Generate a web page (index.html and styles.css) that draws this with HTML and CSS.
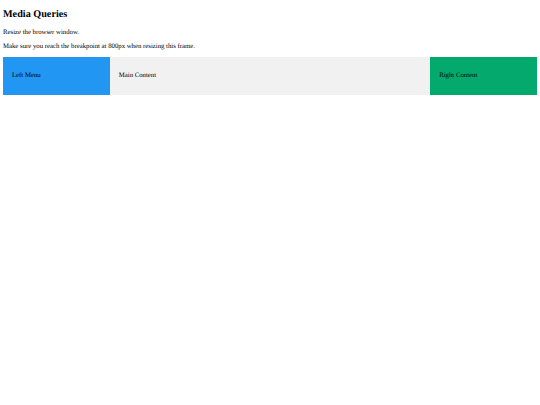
FILE: index.html
```html
<!DOCTYPE html>
<html>
<head>
<meta charset="utf-8">
<link rel="stylesheet" href="styles.css">
</head>
<body>
<h2 class="title">Media Queries</h2>
<p class="text first">Resize the browser window.</p>
<p class="text second">Make sure you reach the breakpoint at 800px when resizing this frame.</p>
<div class="row">
  <div class="cell left"><p class="cell-text">Left Menu</p></div>
  <div class="cell main"><p class="cell-text">Main Content</p></div>
  <div class="cell right"><p class="cell-text">Right Content</p></div>
</div>
</body>
</html>
```
FILE: styles.css
```css
* { box-sizing: border-box; }
html, body { background: #fff; }
body {
  margin: 0;
  padding: 0 3px;
  font-family: "Liberation Serif", "Times New Roman", serif;
  color: #000;
  text-rendering: geometricPrecision;
}
.title {
  font-size: 10.2px;
  line-height: 14px;
  margin: 8px 0 0;
  font-weight: bold;
}
.text {
  font-size: 6.75px;
  line-height: 8px;
  margin: 0;
}
.first { margin-top: 7px; }
.second { margin-top: 6px; }
.row {
  display: flex;
  margin-top: 6px;
}
.cell {
  padding: 15px 9px;
}
.cell-text {
  margin: 0;
  font-size: 6.75px;
  line-height: 8px;
}
.left { width: 20%; background: #2196F3; }
.main { width: 60%; background: #f1f1f1; }
.right { width: 20%; background: #04AA6D; }
```
